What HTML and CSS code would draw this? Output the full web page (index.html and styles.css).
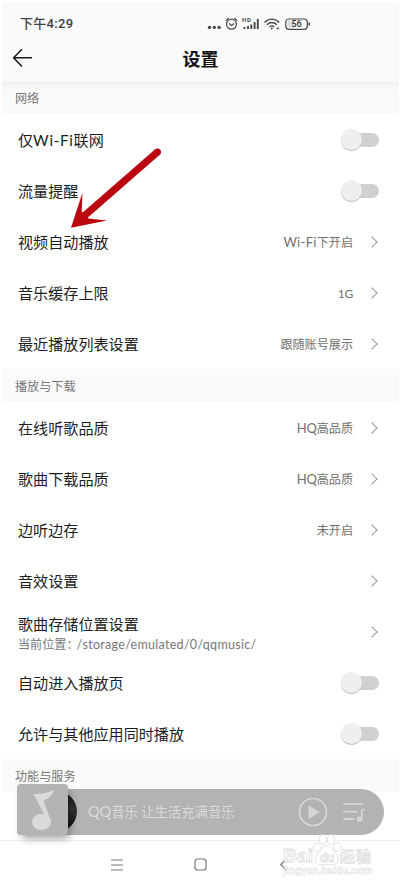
FILE: index.html
```html
<!DOCTYPE html>
<html lang="zh-CN">
<head>
<meta charset="utf-8">
<title>设置</title>
<link rel="stylesheet" href="styles.css">
</head>
<body>
<div class="screen">
  <header class="top">
    <div class="status">
      <span class="time">下午4:29</span>
      <svg class="status-icons" width="106" height="18" viewBox="0 0 106 18" fill="none" stroke="#484848" stroke-width="1.2">
        <g fill="#484848" stroke="none"><circle cx="4.500" cy="12.400" r="1.700"/><circle cx="9.300" cy="12.400" r="1.700"/><circle cx="14.100" cy="12.400" r="1.700"/></g>
        <circle cx="26.500" cy="9.200" r="5"/><path d="M24 8.400l2.300 2 3-2M20.700 5.600l3-2.600M29.300 3l3 2.600"/>
        <path stroke-width="1.900" d="M39.500 14v-2M43 14v-3M46.300 14V9.500M49.600 14V7M52.800 14V4"/>
        <path stroke-width="1.400" d="M59.500 7.400c4.200-4.400 10.500-4.400 14.700 0M62 9.800c3-3 6.900-3 9.800 0M64.500 12c1.500-1.400 3.300-1.400 4.800 0"/><circle cx="66.800" cy="13.400" r="1" fill="#484848" stroke="none"/><circle cx="72.800" cy="13.400" r=".9" stroke-width=".9"/>
        <rect x="80.800" y="4" width="21.500" height="10.300" rx="3"/><rect x="82.500" y="5.500" width="7" height="7.300" rx="1.500" fill="#ddd" stroke="none"/><path stroke-width="1.600" d="M104.300 7.500v3"/>
        <text class="hd" x="37" y="6.800" textLength="9">HD</text><text class="battery" x="86.500" y="12.400">56</text>
      </svg>
    </div>
    <div class="titlebar">
      <svg class="back" width="22" height="20" viewBox="0 0 22 20" fill="none" stroke="#171717" stroke-width="1.500"><path d="M10 1.200L1.600 9.800l8.400 8.600M1.600 9.800h18.300"/></svg>
      <h1>设置</h1>
    </div>
  </header>
  <main>
    <h2 class="section first">网络</h2>
    <div class="row"><span class="label">仅<span class="lat">Wi-Fi</span>联网</span><i class="toggle"></i></div>
    <div class="row"><span class="label">流量提醒</span><i class="toggle"></i></div>
    <div class="row"><span class="label">视频自动播放</span><span class="value"><span class="lat">Wi-Fi</span>下开启</span><i class="chevron"></i></div>
    <div class="row"><span class="label">音乐缓存上限</span><span class="value"><span class="lat gb">1G</span></span><i class="chevron"></i></div>
    <div class="row"><span class="label">最近播放列表设置</span><span class="value">跟随账号展示</span><i class="chevron"></i></div>
    <h2 class="section">播放与下载</h2>
    <div class="row"><span class="label">在线听歌品质</span><span class="value"><span class="lat hq">HQ</span>高品质</span><i class="chevron"></i></div>
    <div class="row"><span class="label">歌曲下载品质</span><span class="value"><span class="lat hq">HQ</span>高品质</span><i class="chevron"></i></div>
    <div class="row"><span class="label">边听边存</span><span class="value">未开启</span><i class="chevron"></i></div>
    <div class="row"><span class="label">音效设置</span><span class="value"></span><i class="chevron"></i></div>
    <div class="row"><div class="stack"><span>歌曲存储位置设置</span><small>当前位置：<span class="path">/storage/emulated/0/qqmusic/</span></small></div><span class="value"></span><i class="chevron"></i></div>
    <div class="row"><span class="label">自动进入播放页</span><i class="toggle"></i></div>
    <div class="row"><span class="label">允许与其他应用同时播放</span><i class="toggle"></i></div>
    <h2 class="section last">功能与服务</h2>
  </main>
  <nav class="system-nav">
    <svg width="12" height="12" viewBox="0 0 12 12" stroke="#777" stroke-width="1.100"><path d="M0 1h12M0 6h12M0 11h12"/></svg>
    <svg width="13" height="13" viewBox="0 0 13 13" fill="none" stroke="#777" stroke-width="1.200"><rect x="1" y="1" width="11" height="11" rx="2.500"/></svg>
    <svg width="12" height="13" viewBox="0 0 12 13" fill="none" stroke="#777" stroke-width="1.200"><path d="M9.500 .7L3.800 6.500l5.700 5.800"/></svg>
  </nav>
  <div class="player">
    <div class="disc"></div>
    <div class="cover"><svg width="51" height="51" viewBox="0 0 51 51" fill="#dadada"><ellipse cx="24.500" cy="38" rx="9.500" ry="8"/><path d="M16.700 10c7 .5 14-.7 19.700-4.200C36 11 31.500 15 26.500 16.800L34 37.500 29 34 16.700 10z"/></svg></div>
    <span class="slogan"><span class="lat">QQ</span>音乐 让生活充满音乐</span>
    <svg class="play" width="30" height="30" viewBox="0 0 30 30" fill="none" stroke="#d5d5d5" stroke-width="1.700"><circle cx="15" cy="15" r="13.500"/><path d="M11.500 10v10.500l8.500-5.200z" fill="#d5d5d5"/></svg>
    <svg class="queue" width="22" height="21" viewBox="0 0 22 21" fill="none" stroke="#d5d5d5" stroke-width="1.800" stroke-linecap="round"><path d="M1 2.200h18.500M1 9.700h12.500M1 17h9.500M18.800 17V8.200l2.200-1"/><circle cx="16.500" cy="17.300" r="2.800" fill="#d5d5d5" stroke="none"/></svg>
  </div>
  <svg class="pointer" width="94" height="84" viewBox="0 0 94 84"><path d="M88.500 7L14 72" stroke="#bb0710" stroke-width="7"/><circle cx="88.500" cy="7" r="3.500" fill="#bb0710"/><path d="M2 82.700L13.500 47.500 12.700 66.500 19.500 73.500 38 75.500z" fill="#bb0710"/></svg>
  <svg class="watermark" width="96" height="46" viewBox="0 0 96 46" fill="#fff" stroke="#d6d6d6" stroke-width=".8">
    <ellipse cx="36" cy="14.500" rx="3.700" ry="4.500"/><ellipse cx="42" cy="6.500" rx="3.700" ry="5"/><ellipse cx="50" cy="6.500" rx="3.700" ry="5"/><ellipse cx="56.300" cy="14" rx="3.700" ry="4.500"/>
    <path d="M46 13c4 0 5.500 4 8.500 7 4 4 4 11-2 11.500H39c-6-.5-6-7-2-11.500 3-3 5-7 9-7z"/>
    <text class="brand" x="2" y="29" textLength="30" lengthAdjust="spacingAndGlyphs">Bai</text><text class="du" x="39" y="29" textLength="14">du</text><text class="cn" x="59" y="29" textLength="31">经验</text><text class="url" x="2" y="41" textLength="89">jingyan.baidu.com</text>
  </svg>
</div>
</body>
</html>
```

FILE: styles.css
```css
* { box-sizing: border-box; }
body { margin: 0; background: #fff; }
.screen {
  position: relative;
  width: 400px;
  height: 888px;
  padding: 2px 1px 0 2px;
  overflow: hidden;
  display: flex;
  flex-direction: column;
  color: #1d1d1d;
  font: 15.100px/20px "Noto Sans CJK SC", sans-serif;
}
.top { height: 79px; background: #fafafa; }
.status { display: flex; justify-content: space-between; align-items: center; height: 32px; padding: 12px 88px 0 18px; }
.time { font: 500 13px/18px Roboto, "Noto Sans CJK SC", sans-serif; letter-spacing: .3px; color: #404040; }
.status-icons { display: block; }
.hd { font: 700 6px Roboto, sans-serif; fill: #484848; stroke: none; }
.battery { font: 500 9px Roboto, sans-serif; fill: #333; stroke: none; }
.titlebar { display: grid; grid-template-columns: 48px 1fr 48px; align-items: center; height: 47px; padding-top: 3px; }
.back { margin: 0 0 2px 10px; }
h1 { margin: 0 0 2px; text-align: center; font-size: 18px; line-height: 24px; font-weight: 700; color: #111; }
.section { margin: 0; height: 33px; padding: 0 13px; background: #fafafa; color: #777; font-size: 12.100px; font-weight: 400; line-height: 34px; }
.first { background: linear-gradient(#f1f1f1, #fafafa 10px); }
.row { display: flex; align-items: center; height: 51px; padding: 1px 20px 0 16px; }
.label { padding-bottom: 2px; }
.lat { font-family: Lato, sans-serif; letter-spacing: .7px; }
.value { margin-left: auto; color: #707070; font-size: 12.100px; }
.value .lat { font-size: 13px; letter-spacing: .3px; }
.value .hq { letter-spacing: -.2px; }
.value .gb { font-size: 12px; letter-spacing: -.3px; }
.chevron { width: 8px; height: 8px; margin: 0 3px 0 15px; border: solid #999; border-width: 1.300px 1.300px 0 0; transform: rotate(45deg); }
.toggle { position: relative; width: 35px; height: 14px; margin-left: auto; border-radius: 7px; background: #d0d0d0; }
.toggle::before { content: ""; position: absolute; left: -3px; top: -4px; width: 21px; height: 21px; border-radius: 50%; background: #efefef; box-shadow: 0 1px 1px #bbb; }
.stack { display: flex; flex-direction: column; gap: 1px; padding-top: 3px; }
small { font-size: 12.100px; line-height: 20px; color: #777; white-space: nowrap; }
.path { margin-left: -2px; font-family: Lato, sans-serif; font-size: 12.500px; letter-spacing: .3px; }
.system-nav { display: grid; grid-template-columns: 83px 83px 83px; justify-content: center; justify-items: center; align-items: center; height: 48px; margin: 48px -1px 0 -2px; border-top: 1px solid #eee; background: #fff; }
.player { position: absolute; left: 17px; top: 789px; display: flex; align-items: center; width: 367px; height: 46px; padding: 0 19px 0 71px; border-radius: 4px 23px 23px 4px; background: #b3b3b3; color: #dadada; font-size: 14px; }
.cover { position: absolute; left: 0; top: -5px; width: 51px; height: 51px; border-radius: 4px; background: #b4b4b4; box-shadow: 3px 5px 9px -2px #0006; }
.cover svg { display: block; }
.disc { position: absolute; left: 19px; top: 2px; width: 41px; height: 41px; border-radius: 50%; background: linear-gradient(#111, #333 45%, #080808); }
.slogan { padding-bottom: 2px; white-space: nowrap; font-size: 13.400px; }
.slogan .lat { letter-spacing: 0; font-size: 14.500px; }
.play { margin-left: auto; margin-right: 15px; }
.queue { flex: none; }
.pointer { position: absolute; left: 69px; top: 145px; }
.watermark { position: absolute; left: 281px; top: 833px; opacity: .8; }
.watermark text { font-family: "Liberation Sans", "Noto Sans CJK SC", sans-serif; font-weight: 700; }
.brand { font-size: 19px; }
.du { font-size: 12px; }
.cn { font-size: 15px; }
.url { font-size: 10px; stroke-width: .5px; }
```
